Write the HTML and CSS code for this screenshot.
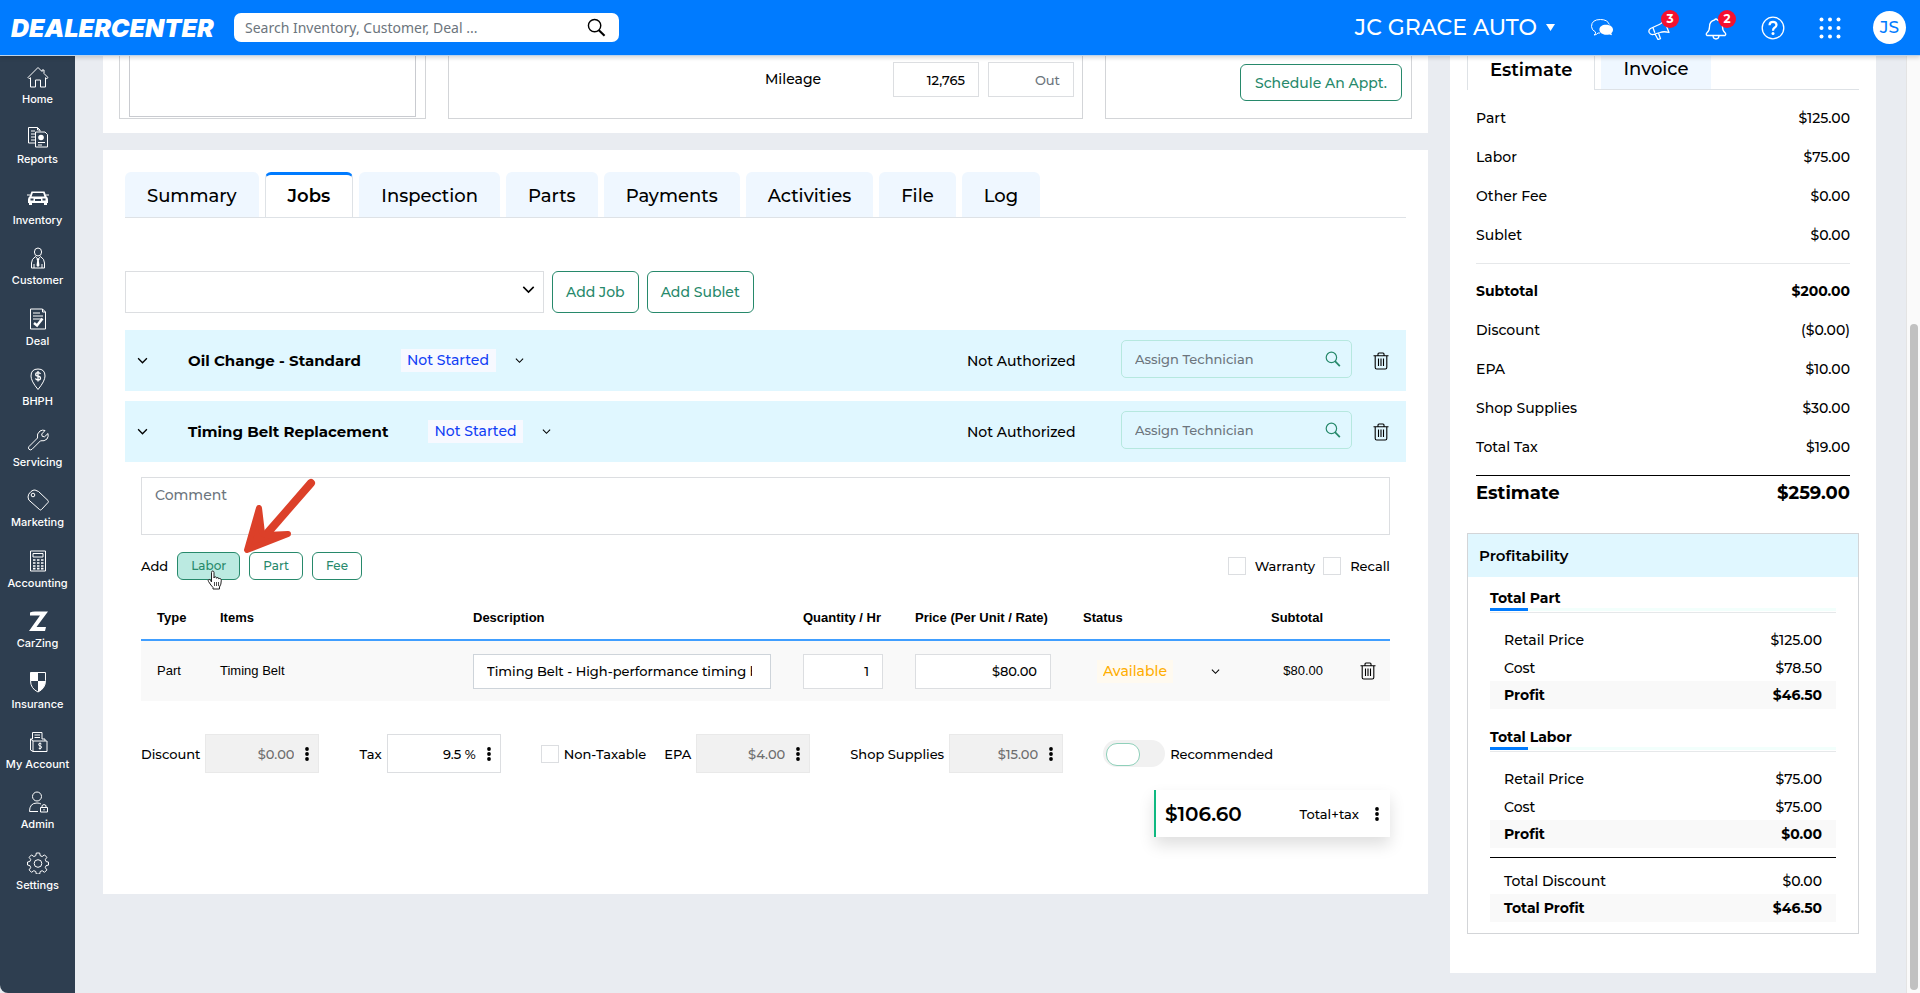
FILE: index.html
```html
<!DOCTYPE html>
<html lang="en">
<head>
    <meta charset="UTF-8">
    <meta name="viewport" content="width=device-width, initial-scale=1.0">
    <title>DealerCenter - Repair Order</title>
    <link rel="stylesheet" href="styles.css">
</head>
<body>

<!-- Shared icons -->
<svg class="icon-defs" aria-hidden="true">
    <symbol id="chevron" viewBox="0 0 10 10"><path d="M1 3l4 4 4-4" fill="none" stroke="currentColor" stroke-width="1.2"/></symbol>
    <symbol id="search" viewBox="0 0 20 20"><circle cx="8" cy="8" r="6.5" fill="none" stroke="currentColor" stroke-width="1.5"/><path d="M12.5 12.8l6 6" stroke="currentColor" stroke-width="2.2"/></symbol>
    <symbol id="trash" viewBox="0 0 16 18"><path d="M.5 3.7h15M5 3.5V2q0-1 1-1h4q1 0 1 1v1.500M2.200 4v11.500q0 1.500 1.500 1.500h8.600q1.500 0 1.500-1.500V4M5.500 6.500v7.500M8 6.500v7.500M10.500 6.500v7.500" fill="none" stroke="currentColor" stroke-width="1.100"/></symbol>
    <symbol id="dots" viewBox="0 0 4 14"><circle cx="2" cy="2" r="1.900"/><circle cx="2" cy="7" r="1.900"/><circle cx="2" cy="12" r="1.900"/></symbol>
</svg>

<header class="topbar">
    <a href="#" class="logo">DEALERCENTER</a>
    <div class="search-box">
        <input type="text" aria-label="Search" placeholder="Search Inventory, Customer, Deal ...">
        <button type="button" aria-label="Search"><svg width="19" height="19"><use href="#search"/></svg></button>
    </div>
    <button type="button" class="store">JC GRACE AUTO
        <svg width="9" height="7" viewBox="0 0 9 7"><path d="M0 0h9L4.500 7z" fill="#fff"/></svg>
    </button>
    <nav class="top-icons">
        <a href="#" aria-label="Messages">
            <svg width="24" height="24" viewBox="0 0 24 24"><path d="M4 19q2-1 1.500-3Q1.500 14 1.500 10.500 1.500 3.500 10.500 3.500q7 0 8.800 5M4 19q2.500 0 4-2h2" fill="none" stroke="#fff" stroke-width="1"/><path d="M16 8.800c4.500 0 7 2.200 7 5 0 1.500-.7 2.600-1.700 3.500l.7 1.900-2.600-.8c-6 1.500-10-1.500-10-4.600 0-3 2.600-5 6.600-5z" fill="#fff"/></svg>
        </a>
        <a href="#" aria-label="Announcements">
            <svg width="24" height="24" viewBox="0 0 24 24"><path d="M17 4l5 12.500q-5-1.500-9 0l-7 2q-2.500.5-3.800-2-1-2.500 1.300-4L10 9.500Q15 8 17 4zM8 18l3 5.500 2.500-.8-2-5.700M6 11.800l1.800 5" fill="none" stroke="#fff" stroke-width="1.300" stroke-linejoin="round"/></svg>
            <span class="badge">3</span>
        </a>
        <a href="#" aria-label="Notifications">
            <svg width="24" height="24" viewBox="0 0 24 24"><path d="M3 19.500q-1.500-1 0-2.700 2.500-2 2.500-6Q5.500 5 10.500 4q1.500-2 3 0 5 1 5 6.800 0 4 2.500 6 1.500 1.700 0 2.700zM9 20q.3 3 3 3t3-3" fill="none" stroke="#fff" stroke-width="1.300"/></svg>
            <span class="badge">2</span>
        </a>
        <a href="#" aria-label="Help">
            <svg width="24" height="24" viewBox="0 0 24 24"><circle cx="12" cy="12" r="10.800" fill="none" stroke="#fff" stroke-width="1.300"/><path d="M8.500 9.200Q8.700 5.800 12 5.800t3.500 3.100Q15.500 10.500 13.200 12q-1.200.8-1.200 2.700" fill="none" stroke="#fff" stroke-width="2.200"/><circle cx="12" cy="17.500" r="1.500" fill="#fff"/></svg>
        </a>
        <a href="#" aria-label="Apps">
            <svg width="24" height="24" viewBox="0 0 24 24" fill="#fff"><circle cx="3.500" cy="3.500" r="2"/><circle cx="12" cy="3.500" r="2"/><circle cx="20.500" cy="3.500" r="2"/><circle cx="3.500" cy="12" r="2"/><circle cx="12" cy="12" r="2"/><circle cx="20.500" cy="12" r="2"/><circle cx="3.500" cy="20.500" r="2"/><circle cx="12" cy="20.500" r="2"/><circle cx="20.500" cy="20.500" r="2"/></svg>
        </a>
    </nav>
    <a href="#" class="avatar">JS</a>
</header>

<div class="page">
    <nav class="sidebar">
        <a href="#">
            <svg viewBox="0 0 22 22"><path d="M1 11.500L11 1.500l4 4V4h2v3.500l4 4-1.200 1.200-1.300-1V21h-5v-7H8.500v7h-5v-9.300l-1.300 1z"/></svg>
            <span>Home</span>
        </a>
        <a href="#">
            <svg viewBox="0 0 22 22"><path d="M8 17H1.500V1.500h9L13 4v1.500M10.500 1.500V4H13M4 5h4M4 8h4M4 11h4M4 14h4"/><path d="M8.500 6h9.500l2.500 2.500V21h-12zM11 16.500h7M11 19h4"/><circle cx="14" cy="11.500" r="2.800" class="solid"/></svg>
            <span>Reports</span>
        </a>
        <a href="#">
            <svg viewBox="0 0 22 22"><path d="M4.500 4.500h13l2 5q1.500 1 1.500 3v3.500h-1V18h-3v-2h-12v2H2v-2H1v-3.500q0-2 1.500-3zM5.800 6L4.600 9.500h12.800L16.200 6z" class="solid" fill-rule="evenodd"/><path d="M0 8h3M19 8h3"/><path d="M3.500 12.500h3M15.500 12.500h3M8 13h6" class="dark"/></svg>
            <span>Inventory</span>
        </a>
        <a href="#">
            <svg viewBox="0 0 22 22"><ellipse cx="11" cy="5" rx="3.600" ry="4"/><path d="M8.500 9.500Q4.500 12 4.500 16v5h13v-5q0-4-4-6.500M7 21v-4M15 21v-4M8.500 9.500l2.500 3 2.500-3"/><path d="M11 11l1.500 1.500-.7 1 .7 5L11 20l-1.500-1.500.7-5-.7-1z" class="solid"/></svg>
            <span>Customer</span>
        </a>
        <a href="#">
            <svg viewBox="0 0 22 22"><path d="M3.500 1h12L18.500 4v17h-15zM15.500 1v3h3M6 5h7M6 8h10M6 11h8"/><path d="M7 15l3 2.500 5.500-7" stroke-width="2.500"/></svg>
            <span>Deal</span>
        </a>
        <a href="#">
            <svg viewBox="0 0 22 22"><path d="M11 21.500Q4 13 4 8q0-7 7-7t7 7q0 5-7 13.500z"/><path d="M13.500 6Q13 4.700 11 4.700 8.700 4.700 8.700 6.500q0 1.500 2.300 1.700 2.500.3 2.500 2 0 1.800-2.500 1.800-2.200 0-2.500-1.600M11 3v10.500" stroke-width="1.300"/></svg>
            <span>BHPH</span>
        </a>
        <a href="#">
            <svg viewBox="0 0 22 22"><path d="M2 17.500L10.500 9Q9.500 4.500 13 2q2.500-1.500 5-.5L14.700 5l.5 2.300 2.300.5L21 4.500q.8 3-1 5.500-2.500 2.500-6.500 1.800L5 20.300q-1.500 1.200-3 0-1.200-1.500 0-2.800z"/></svg>
            <span>Servicing</span>
        </a>
        <a href="#">
            <svg viewBox="0 0 22 22"><path d="M1 8q0-3 3-5.500Q6 .8 8 1l3.500 1.500 9.500 9q.8 1 0 2l-6.500 7q-1 1-2 0L1.800 11z"/><circle cx="6" cy="6" r="1.800"/></svg>
            <span>Marketing</span>
        </a>
        <a href="#">
            <svg viewBox="0 0 22 22"><path d="M3.500 1h15v20h-15zM6 3.500h10v3.500H6z"/><path d="M6 10h2.500M10 10h2.500M14 10h2.500M6 13h2.500M10 13h2.500M14 13h2.500M6 16h2.500M10 16h2.500M14 16h2.500M6 18.700h2.500M10 18.700h2.500M14 18.700h2.500" stroke-width="1.700"/></svg>
            <span>Accounting</span>
        </a>
        <a href="#">
            <svg viewBox="0 0 22 22"><path d="M3 2.500q2-1 5-1h13L9.500 17H19l-1 4H2L13 5.500H3z" class="solid"/></svg>
            <span>CarZing</span>
        </a>
        <a href="#">
            <svg viewBox="0 0 22 22"><path d="M3.500 1.500h15v8q0 8-7.500 11.500Q3.500 17.500 3.500 9.500z"/><path d="M3.500 1.500H11v8.500H3.500zM11 10h7.500q-.5 7.500-7.500 11z" class="solid"/></svg>
            <span>Insurance</span>
        </a>
        <a href="#">
            <svg viewBox="0 0 22 22"><path d="M5.500 8V1.500H15V8M7.500 4h5.500M7.500 6.500h5.500M5.500 8H3.500v11L6 20.500V10h14v10.500H6M3.500 8L6 10M15 8h3v2"/><path d="M14.500 13q-.5-.7-1.500-.7-1.500 0-1.500 1.200t1.600 1.400q1.500.2 1.500 1.300T13 17.700q-1.200 0-1.600-.8M13 11.500v7"/></svg>
            <span>My Account</span>
        </a>
        <a href="#">
            <svg viewBox="0 0 22 22"><circle cx="10" cy="5.500" r="4.500"/><path d="M11 20.500H2.500q0-8.500 7.500-8.500 2.500 0 4 1M13.500 16.500h7v4.500h-7zM15 16.500v-2q2-2 4 0v2M17 18v1.500"/></svg>
            <span>Admin</span>
        </a>
        <a href="#">
            <svg viewBox="0 0 22 22"><path d="M9.300 1h3.400l.5 2.700 2 .8 2.300-1.600 2.400 2.400-1.600 2.300.8 2 2.400.5v3l-2.400.5-.8 2 1.600 2.300-2.400 2.400-2.300-1.600-2 .8-.5 2.500H9.300l-.5-2.500-2-.8-2.300 1.600-2.400-2.400 1.600-2.300-.8-2L.5 13v-3l2.400-.5.8-2-1.600-2.200 2.400-2.400 2.300 1.600 2-.8z"/><circle cx="11" cy="11.500" r="3.800"/></svg>
            <span>Settings</span>
        </a>
    </nav>

    <main class="content">
        <div class="main-column">
            <section class="card vehicle-card">
                <div class="info-box info-photo"><div class="photo-frame"></div></div>
                <div class="info-box info-mileage">
                    <label for="mileage-in">Mileage</label>
                    <input type="text" id="mileage-in" value="12,765">
                    <input type="text" aria-label="Mileage out" placeholder="Out">
                </div>
                <div class="info-box info-appt">
                    <button type="button" class="btn">Schedule An Appt.</button>
                </div>
            </section>

            <section class="card jobs-card">
                <div class="tabs">
                    <button type="button" class="tab">Summary</button>
                    <button type="button" class="tab active">Jobs</button>
                    <button type="button" class="tab">Inspection</button>
                    <button type="button" class="tab">Parts</button>
                    <button type="button" class="tab">Payments</button>
                    <button type="button" class="tab">Activities</button>
                    <button type="button" class="tab">File</button>
                    <button type="button" class="tab">Log</button>
                </div>

                <div class="add-job">
                    <div class="job-picker">
                        <select aria-label="Job"><option></option></select>
                        <svg width="13" height="13"><use href="#chevron"/></svg>
                    </div>
                    <button type="button" class="btn btn-tall">Add Job</button>
                    <button type="button" class="btn btn-tall">Add Sublet</button>
                </div>

                <div class="job-bar">
                    <button type="button" class="icon-btn toggle-job" aria-label="Collapse"><svg width="11" height="11"><use href="#chevron"/></svg></button>
                    <h2>Oil Change - Standard</h2>
                    <div class="status">
                        <select aria-label="Job status"><option>Not Started</option></select>
                        <svg width="9" height="9"><use href="#chevron"/></svg>
                    </div>
                    <span class="authorized">Not Authorized</span>
                    <div class="technician">
                        <input type="text" aria-label="Technician" placeholder="Assign Technician">
                        <svg width="16" height="16"><use href="#search"/></svg>
                    </div>
                    <button type="button" class="icon-btn" aria-label="Delete job"><svg width="16" height="18"><use href="#trash"/></svg></button>
                </div>

                <div class="job-bar">
                    <button type="button" class="icon-btn toggle-job" aria-label="Collapse"><svg width="11" height="11"><use href="#chevron"/></svg></button>
                    <h2>Timing Belt Replacement</h2>
                    <div class="status">
                        <select aria-label="Job status"><option>Not Started</option></select>
                        <svg width="9" height="9"><use href="#chevron"/></svg>
                    </div>
                    <span class="authorized">Not Authorized</span>
                    <div class="technician">
                        <input type="text" aria-label="Technician" placeholder="Assign Technician">
                        <svg width="16" height="16"><use href="#search"/></svg>
                    </div>
                    <button type="button" class="icon-btn" aria-label="Delete job"><svg width="16" height="18"><use href="#trash"/></svg></button>
                </div>

                <div class="job-body">
                    <textarea class="comment" aria-label="Comment" placeholder="Comment"></textarea>

                    <div class="add-row">
                        <span>Add</span>
                        <div class="labor">
                            <button type="button" class="btn btn-small hovered">Labor</button>
                            <svg class="arrow" width="78" height="80" viewBox="0 0 78 80"><path d="M70 6L23 60" stroke="#dc4029" stroke-width="8" stroke-linecap="round"/><path d="M6 73L18 31L21 56L25 58L47 57Z" fill="#dc4029" stroke="#dc4029" stroke-width="6" stroke-linejoin="round"/></svg>
                            <svg class="pointer" width="16" height="20" viewBox="0 0 16 20"><path d="M4.500 12V2.500Q4.500 1 5.700 1T7 2.500V8q.3-1.500 1.500-1.200 1 .2 1 1.500.3-1 1.400-.7 1 .2 1 1.400.4-.8 1.400-.4 1 .4 1 1.600 0 4.500-1.800 6.800V19H6v-1.500Q4 15.500 1.500 11.500q-.8-1.500.3-2 1-.3 1.700.8z" fill="#fff" stroke="#222" stroke-width="1"/><path d="M7.500 12v4M9.500 12v4M11.500 12v4" stroke="#222" stroke-width=".8"/></svg>
                        </div>
                        <button type="button" class="btn btn-small">Part</button>
                        <button type="button" class="btn btn-small">Fee</button>
                        <div class="flags">
                            <label><input type="checkbox" class="check">Warranty</label>
                            <label><input type="checkbox" class="check">Recall</label>
                        </div>
                    </div>

                    <table class="items">
                        <thead>
                            <tr>
                                <th class="col-type">Type</th>
                                <th>Items</th>
                                <th class="col-desc">Description</th>
                                <th class="col-qty">Quantity / Hr</th>
                                <th class="col-price">Price (Per Unit / Rate)</th>
                                <th class="col-status">Status</th>
                                <th class="col-subtotal">Subtotal</th>
                                <th class="col-delete"></th>
                            </tr>
                        </thead>
                        <tbody>
                            <tr>
                                <td>Part</td>
                                <td>Timing Belt</td>
                                <td><input type="text" class="left" aria-label="Description" value="Timing Belt - High-performance timing belt"></td>
                                <td><input type="text" aria-label="Quantity" value="1"></td>
                                <td><input type="text" aria-label="Price" value="$80.00"></td>
                                <td>
                                    <div class="status available">
                                        <select aria-label="Part status"><option>Available</option></select>
                                        <svg width="9" height="9"><use href="#chevron"/></svg>
                                    </div>
                                </td>
                                <td class="col-subtotal">$80.00</td>
                                <td class="col-delete"><button type="button" class="icon-btn" aria-label="Delete item"><svg width="16" height="18"><use href="#trash"/></svg></button></td>
                            </tr>
                        </tbody>
                    </table>

                    <div class="charges">
                        <div class="charge">
                            <label for="discount">Discount</label>
                            <div class="amount disabled"><input type="text" id="discount" value="$0.00" disabled><button type="button" class="icon-btn" aria-label="Discount options"><svg width="4" height="14"><use href="#dots"/></svg></button></div>
                        </div>
                        <div class="charge">
                            <label for="tax">Tax</label>
                            <div class="amount"><input type="text" id="tax" value="9.5 %"><button type="button" class="icon-btn" aria-label="Tax options"><svg width="4" height="14"><use href="#dots"/></svg></button></div>
                        </div>
                        <div class="charge">
                            <label class="non-taxable"><input type="checkbox" class="check">Non-Taxable</label>
                            <label for="epa">EPA</label>
                            <div class="amount disabled"><input type="text" id="epa" value="$4.00" disabled><button type="button" class="icon-btn" aria-label="EPA options"><svg width="4" height="14"><use href="#dots"/></svg></button></div>
                        </div>
                        <div class="charge">
                            <label for="supplies">Shop Supplies</label>
                            <div class="amount disabled"><input type="text" id="supplies" value="$15.00" disabled><button type="button" class="icon-btn" aria-label="Shop supplies options"><svg width="4" height="14"><use href="#dots"/></svg></button></div>
                        </div>
                        <label class="charge"><input type="checkbox" class="switch">Recommended</label>
                    </div>

                    <div class="job-total">
                        <strong>$106.60</strong>
                        <span>Total+tax</span>
                        <button type="button" class="icon-btn" aria-label="Total options"><svg width="4" height="14"><use href="#dots"/></svg></button>
                    </div>
                </div>
            </section>
        </div>

        <aside class="summary">
            <div class="summary-tabs">
                <button type="button" class="tab active">Estimate</button>
                <button type="button" class="tab">Invoice</button>
            </div>
            <dl class="totals">
                <div><dt>Part</dt><dd>$125.00</dd></div>
                <div><dt>Labor</dt><dd>$75.00</dd></div>
                <div><dt>Other Fee</dt><dd>$0.00</dd></div>
                <div><dt>Sublet</dt><dd>$0.00</dd></div>
            </dl>
            <dl class="totals totals-after">
                <div class="bold"><dt>Subtotal</dt><dd>$200.00</dd></div>
                <div><dt>Discount</dt><dd>($0.00)</dd></div>
                <div><dt>EPA</dt><dd>$10.00</dd></div>
                <div><dt>Shop Supplies</dt><dd>$30.00</dd></div>
                <div><dt>Total Tax</dt><dd>$19.00</dd></div>
            </dl>
            <dl class="totals grand">
                <div><dt>Estimate</dt><dd>$259.00</dd></div>
            </dl>

            <section class="profit">
                <h2>Profitability</h2>
                <div class="profit-body">
                    <h3>Total Part</h3>
                    <dl>
                        <div><dt>Retail Price</dt><dd>$125.00</dd></div>
                        <div><dt>Cost</dt><dd>$78.50</dd></div>
                        <div class="shaded"><dt>Profit</dt><dd>$46.50</dd></div>
                    </dl>
                    <h3>Total Labor</h3>
                    <dl>
                        <div><dt>Retail Price</dt><dd>$75.00</dd></div>
                        <div><dt>Cost</dt><dd>$75.00</dd></div>
                        <div class="shaded"><dt>Profit</dt><dd>$0.00</dd></div>
                    </dl>
                    <dl class="profit-total">
                        <div><dt>Total Discount</dt><dd>$0.00</dd></div>
                        <div class="shaded"><dt>Total Profit</dt><dd>$46.50</dd></div>
                    </dl>
                </div>
            </section>
        </aside>
    </main>

    <div class="scroll-track"><div class="scroll-thumb"></div></div>
</div>

</body>
</html>
```
FILE: styles.css
```css
* {
    box-sizing: border-box;
}
body {
    margin: 0;
    height: 100vh;
    display: flex;
    flex-direction: column;
    overflow: hidden;
    background-color: #e9ecf1;
    color: #000;
    font-family: Montserrat, Inter, sans-serif;
    font-size: 14px;
    font-weight: 500;
    line-height: 20px;
}
button, input, select, textarea {
    font: inherit;
    color: inherit;
    border-radius: 0;
}
button {
    padding: 0;
    border: none;
    background: none;
    cursor: pointer;
}
a {
    color: inherit;
    text-decoration: none;
}
svg {
    display: block;
    flex-shrink: 0;
}
h2, h3, dl, dd {
    margin: 0;
}
::placeholder {
    color: #6c757d;
    opacity: 1;
}
.icon-defs {
    position: absolute;
    width: 0;
    height: 0;
}

/* Top bar */
.topbar {
    display: flex;
    align-items: center;
    height: 56px;
    padding: 0 14px 0 11px;
    flex-shrink: 0;
    background-color: #007bff;
    border-bottom: 1px solid #bcd3ea;
    box-shadow: 0 2px 4px rgba(0, 0, 0, 0.15);
    color: #fff;
    z-index: 1;
}
.logo {
    width: 223px;
    font-family: Inter, sans-serif;
    font-size: 25px;
    font-weight: 900;
    font-style: italic;
}
.search-box {
    display: flex;
    align-items: center;
    width: 385px;
    height: 29px;
    padding: 0 13px 0 11px;
    border-radius: 7px;
    background-color: #fff;
    color: #000;
}
.search-box input {
    flex: 1;
    border: none;
    outline: none;
    padding: 0;
    font-family: "Noto Sans", sans-serif;
    font-size: 14px;
    font-weight: 400;
}
.store {
    display: flex;
    align-items: center;
    gap: 9px;
    margin-left: auto;
    font-size: 22px;
}
.top-icons {
    display: flex;
    gap: 33px;
    margin: 0 31px 0 35px;
}
.top-icons a {
    position: relative;
}
.badge {
    position: absolute;
    top: -6px;
    right: -8px;
    width: 18px;
    height: 18px;
    border-radius: 50%;
    background-color: #f5112f;
    font-size: 12px;
    font-weight: 700;
    line-height: 18px;
    text-align: center;
}
.avatar {
    width: 33px;
    height: 33px;
    border-radius: 50%;
    background-color: #fff;
    color: #007bff;
    font-size: 17px;
    line-height: 33px;
    text-align: center;
}

/* Side menu */
.page {
    flex: 1;
    display: flex;
    min-height: 0;
}
.sidebar {
    display: flex;
    flex-direction: column;
    justify-content: space-between;
    width: 75px;
    padding: 10px 0 101px;
    flex-shrink: 0;
    background-color: #2e3e50;
    border-bottom-left-radius: 8px;
    color: #fff;
    font-family: Inter, sans-serif;
    font-size: 11px;
    line-height: 14px;
}
.sidebar a {
    display: flex;
    flex-direction: column;
    align-items: center;
    gap: 4px;
}
.sidebar svg {
    width: 22px;
    height: 22px;
    fill: none;
    stroke: #fff;
    stroke-width: 1;
}
.sidebar .solid {
    fill: #fff;
    stroke: none;
}
.sidebar .dark {
    stroke: #2e3e50;
    stroke-width: 2;
}

/* Content */
.content {
    flex: 1;
    display: flex;
    align-items: flex-start;
    gap: 22px;
    min-width: 0;
    padding: 0 30px 0 28px;
    overflow: hidden;
}
.main-column {
    flex: 1;
    min-width: 0;
}
.card {
    background-color: #fff;
}
.btn {
    height: 37px;
    padding: 0 14px;
    border: 1px solid #27896b;
    border-radius: 6px;
    background-color: #fff;
    color: #27896b;
    white-space: nowrap;
}
.btn-tall {
    height: 42px;
    padding: 0 13px;
}
.btn-small {
    height: 28px;
    padding: 0 13px;
    font-size: 12px;
}
.hovered {
    background-color: #bbeae1;
}
.icon-btn {
    display: flex;
    align-items: center;
    justify-content: center;
}
.vehicle-card {
    display: flex;
    gap: 22px;
    padding: 0 16px 14px;
    margin-bottom: 17px;
}
.info-box {
    height: 63px;
    border: 1px solid #d3d5d8;
    border-top: none;
}
.info-photo {
    width: 307px;
    padding: 0 9px;
}
.photo-frame {
    height: 61px;
    border: 1px solid #c9cbd0;
    border-top: none;
}
.info-mileage {
    flex: 1;
    display: flex;
    align-items: flex-start;
    justify-content: flex-end;
    gap: 9px;
    padding: 6px 8px 0;
}
.info-mileage label {
    width: 119px;
    line-height: 34px;
}
.info-mileage input {
    width: 86px;
    height: 35px;
    padding: 0 13px;
    border: 1px solid #dcdee1;
    text-align: right;
    font-size: 13px;
}
.info-appt {
    display: flex;
    justify-content: flex-end;
    width: 307px;
    padding: 8px 9px 0;
}

/* Tabs */
.tabs, .summary-tabs {
    display: flex;
    border-bottom: 1px solid #dee2e6;
}
.tabs {
    gap: 6px;
}
.tab {
    height: 45px;
    padding: 2px 22px 0;
    border-radius: 6px 6px 0 0;
    background-color: #eff7ff;
    font-size: 18px;
}
.tab.active {
    margin-bottom: -1px;
    padding: 0 22px;
    border: 1px solid #dee2e6;
    border-top: 3px solid #007bff;
    border-bottom: none;
    background-color: #fff;
    font-weight: 600;
}

/* Jobs */
.jobs-card {
    padding: 22px 22px 57px;
}
.add-job {
    display: flex;
    gap: 8px;
    margin: 53px 0 17px;
}
.job-picker {
    position: relative;
    width: 419px;
}
.job-picker select {
    appearance: none;
    width: 100%;
    height: 42px;
    border: 1px solid #dcdee1;
    background-color: #fff;
}
.job-picker svg {
    position: absolute;
    top: 12px;
    right: 9px;
    pointer-events: none;
}
.job-bar {
    display: flex;
    align-items: center;
    height: 61px;
    padding: 0 17px 0 12px;
    margin-bottom: 10px;
    background-color: #e0f7ff;
}
.toggle-job {
    width: 11px;
    margin-right: 40px;
}
.job-bar h2 {
    margin-right: 40px;
    font-size: 15px;
    font-weight: 700;
}
.status {
    display: flex;
    align-items: center;
    gap: 19px;
}
.status select {
    appearance: none;
    height: 23px;
    padding: 0 6px;
    border: none;
    background-color: #f7f9ff;
    color: #123ff5;
    line-height: 23px;
}
.authorized {
    width: 154px;
    margin-left: auto;
}
.technician {
    display: flex;
    align-items: center;
    width: 231px;
    height: 38px;
    padding: 0 10px 0 13px;
    margin: 0 21px 3px 0;
    border: 1px solid #b6e8df;
    border-radius: 5px;
    color: #27896b;
}
.technician input {
    flex: 1;
    min-width: 0;
    padding: 0;
    border: none;
    background: none;
    font-size: 13px;
}
.job-body {
    padding: 5px 16px 0;
}
.comment {
    display: block;
    width: 100%;
    height: 58px;
    padding: 7px 13px;
    border: 1px solid #dcdee1;
    resize: none;
}
.add-row {
    display: flex;
    align-items: center;
    gap: 9px;
    margin-top: 17px;
    font-size: 13px;
}
.labor {
    position: relative;
}
.arrow {
    position: absolute;
    top: -75px;
    left: 64px;
}
.pointer {
    position: absolute;
    top: 18px;
    left: 30px;
}
.flags {
    display: flex;
    gap: 8px;
    margin-left: auto;
}
.flags label {
    display: flex;
    align-items: center;
    gap: 9px;
}
.check {
    appearance: none;
    width: 18px;
    height: 18px;
    margin: 0;
    border: 1px solid #dcdee1;
    background-color: #fff;
}

/* Items table */
.items {
    width: 100%;
    margin-top: 14px;
    border-collapse: collapse;
    table-layout: fixed;
    font-family: "Liberation Sans", Arial, sans-serif;
    font-size: 13px;
    font-weight: 400;
}
.items th, .items td {
    padding: 0 16px;
    text-align: left;
    white-space: nowrap;
}
.items th {
    height: 46px;
    padding-top: 2px;
    border-bottom: 2px solid #409eff;
}
.items td {
    height: 61px;
    background-color: #f9f9f9;
}
.items input {
    width: 100%;
    height: 35px;
    padding: 0 13px;
    border: 1px solid #dcdee1;
    background-color: #fff;
    font-family: Montserrat, Inter, sans-serif;
    font-size: 13px;
    font-weight: 500;
    text-align: right;
}
.items .left {
    padding-right: 18px;
    border-color: #ced4da;
    text-align: left;
}
.col-type {
    width: 63px;
}
.col-desc {
    width: 330px;
}
.col-qty {
    width: 112px;
}
.col-price {
    width: 168px;
}
.col-status {
    width: 160px;
}
.items .col-subtotal {
    width: 112px;
    text-align: right;
}
.items .col-delete {
    width: 51px;
    padding: 0 14px 0 21px;
}
.available {
    gap: 38px;
    padding-left: 14px;
    font-family: Montserrat, Inter, sans-serif;
    font-size: 14px;
    font-weight: 500;
}
.available select {
    background-color: #fffaf0;
    color: #ffae00;
}

/* Charges */
.charges {
    display: flex;
    gap: 40px;
    margin-top: 33px;
    font-size: 13px;
}
.charge, .non-taxable {
    display: flex;
    align-items: center;
    gap: 5px;
    white-space: nowrap;
}
.non-taxable {
    margin-right: 13px;
}
.amount {
    display: flex;
    align-items: center;
    width: 114px;
    height: 39px;
    padding-right: 9px;
    border: 1px solid #dcdee1;
}
.amount input {
    flex: 1;
    min-width: 0;
    padding: 0 11px 0 0;
    border: none;
    background: none;
    text-align: right;
}
.amount.disabled {
    border-color: #e9e9e9;
    background-color: #f1f1f1;
}
.amount.disabled input {
    color: #6d6d6d;
}
.switch {
    appearance: none;
    width: 62px;
    height: 27px;
    padding: 3px;
    margin: 0;
    border-radius: 14px;
    background-color: #f1f1f1;
}
.switch::before {
    content: "";
    display: block;
    width: 32px;
    height: 21px;
    border: 1px solid #8fd0ba;
    border-radius: 11px;
    background-color: #fff;
}
.job-total {
    display: flex;
    align-items: center;
    width: 236px;
    height: 47px;
    padding: 0 11px 0 9px;
    margin: 17px 0 0 auto;
    border-left: 2px solid #10b981;
    box-shadow: 0 8px 16px rgba(0, 0, 0, 0.13);
    font-size: 13px;
}
.job-total strong {
    flex: 1;
    font-size: 20px;
    font-weight: 600;
}
.job-total .icon-btn {
    margin-left: 16px;
}

/* Estimate panel */
.summary {
    width: 426px;
    flex-shrink: 0;
    padding: 0 17px 39px;
    background-color: #fff;
}
.summary-tabs {
    gap: 6px;
    height: 34px;
}
.summary-tabs .tab {
    height: 33px;
    padding: 0 22px 7px;
    border-radius: 0;
}
.summary-tabs .tab.active {
    height: 34px;
    border-top: none;
}
.totals {
    padding: 9px 9px 0;
}
.totals div {
    display: flex;
    justify-content: space-between;
    padding: 9px 0 10px;
}
.totals-after {
    margin: 8px 9px 0;
    padding: 8px 0 0;
    border-top: 1px solid #e6e8ea;
}
.totals .bold {
    font-weight: 700;
}
.grand {
    margin: 8px 9px 0;
    padding: 0;
    border-top: 1px solid #000;
    font-size: 18px;
    font-weight: 700;
}
.grand div {
    padding: 7px 0 10px;
}
.profit {
    margin-top: 20px;
    border: 1px solid #d3d5d8;
}
.profit h2 {
    padding: 12px 11px 11px;
    background-color: #e0f7ff;
    font-size: 15px;
    font-weight: 600;
}
.profit-body {
    padding: 11px 22px;
}
.profit h3 {
    padding-bottom: 1px;
    border-bottom: 1px solid #e6e8ea;
    font-size: 14px;
    font-weight: 700;
}
.profit h3::after {
    content: "";
    display: block;
    height: 3px;
    background: linear-gradient(to right, #007bff 38px, #f2fffc 38px);
}
.profit dl {
    margin: 13px 0 18px;
}
.profit dl div {
    display: flex;
    justify-content: space-between;
    padding: 4px 14px;
}
.profit dl .shaded {
    margin-top: -1px;
    background-color: #f9f9f9;
    font-weight: 700;
}
.profit .profit-total {
    margin: -9px 0 0;
    padding-top: 9px;
    border-top: 1px solid #000;
}

/* Scrollbar */
.scroll-track {
    width: 14px;
    padding: 268px 2px 3px 3px;
    flex-shrink: 0;
    border-left: 1px solid #e4e4e4;
    background-color: #fafafa;
}
.scroll-thumb {
    height: 100%;
    border-radius: 4px;
    background-color: #c1c1c1;
}
```
